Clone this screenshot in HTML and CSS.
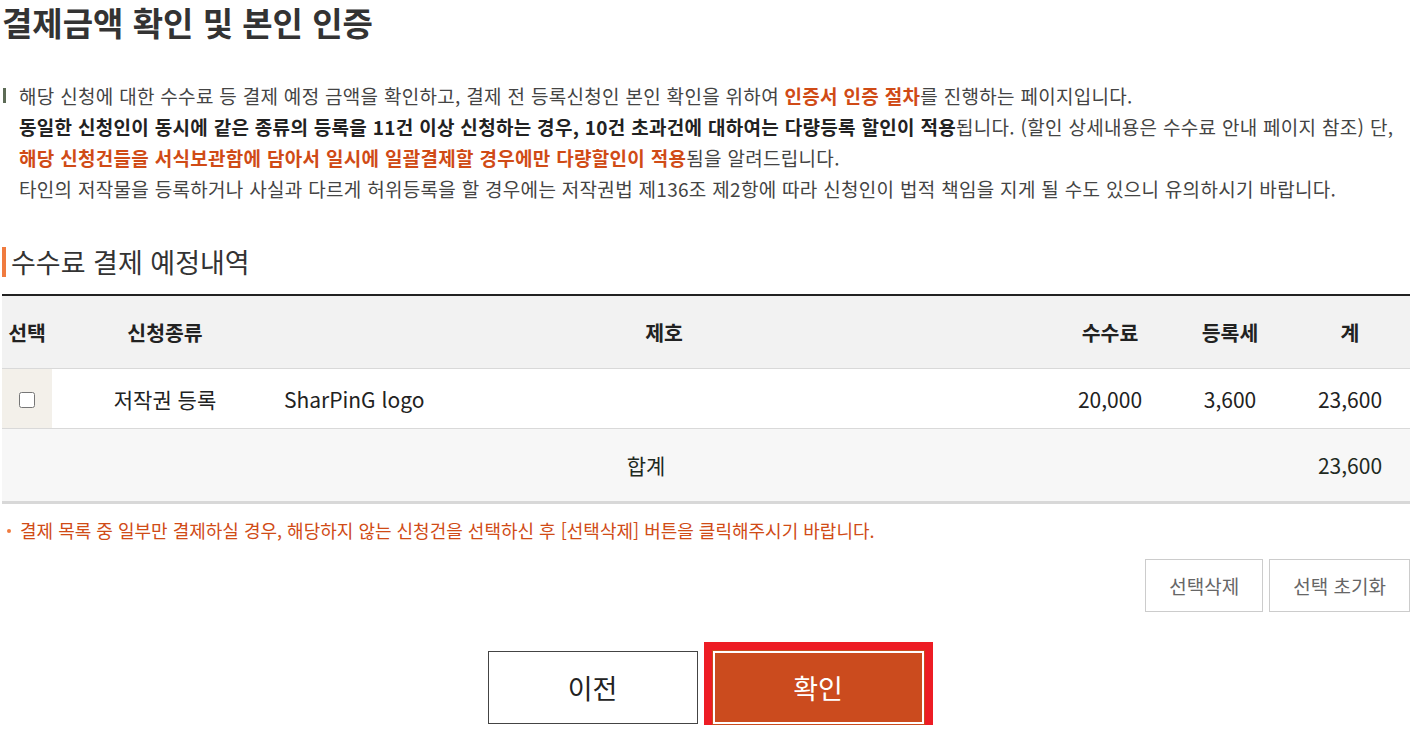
FILE: index.html
```html
<!DOCTYPE html>
<html lang="ko">
<head>
  <meta charset="UTF-8">
  <meta name="viewport" content="width=device-width, initial-scale=1.0">
  <title>결제금액 확인 및 본인 인증</title>
  <link rel="stylesheet" href="styles.css">
</head>
<body>
  <div class="page">
    <h1>결제금액 확인 및 본인 인증</h1>

    <div class="intro">
      <p class="intro-first">해당 신청에 대한 수수료 등 결제 예정 금액을 확인하고, 결제 전 등록신청인 본인 확인을 위하여 <b class="hl">인증서 인증 절차</b>를 진행하는 페이지입니다.</p>
      <p><b>동일한 신청인이 동시에 같은 종류의 등록을 11건 이상 신청하는 경우, 10건 초과건에 대하여는 다량등록 할인이 적용</b>됩니다. (할인 상세내용은 수수료 안내 페이지 참조) 단,</p>
      <p><b class="hl">해당 신청건들을 서식보관함에 담아서 일시에 일괄결제할 경우에만 다량할인이 적용</b>됨을 알려드립니다.</p>
      <p>타인의 저작물을 등록하거나 사실과 다르게 허위등록을 할 경우에는 저작권법 제136조 제2항에 따라 신청인이 법적 책임을 지게 될 수도 있으니 유의하시기 바랍니다.</p>
    </div>

    <h2 class="section-title">수수료 결제 예정내역</h2>

    <table class="fee-table">
      <colgroup>
        <col style="width: 50px">
        <col style="width: 226px">
        <col>
        <col style="width: 120px">
        <col style="width: 120px">
        <col style="width: 120px">
      </colgroup>
      <thead>
        <tr>
          <th>선택</th>
          <th>신청종류</th>
          <th>제호</th>
          <th>수수료</th>
          <th>등록세</th>
          <th>계</th>
        </tr>
      </thead>
      <tbody>
        <tr>
          <td class="check-cell"><input type="checkbox"></td>
          <td>저작권 등록</td>
          <td class="title-cell">SharPinG logo</td>
          <td>20,000</td>
          <td>3,600</td>
          <td>23,600</td>
        </tr>
      </tbody>
      <tfoot>
        <tr>
          <td colspan="5">합계</td>
          <td>23,600</td>
        </tr>
      </tfoot>
    </table>

    <p class="notice">결제 목록 중 일부만 결제하실 경우, 해당하지 않는 신청건을 선택하신 후 [선택삭제] 버튼을 클릭해주시기 바랍니다.</p>

    <div class="table-actions">
      <button class="small-button">선택삭제</button>
      <button class="small-button">선택 초기화</button>
    </div>

    <div class="bottom-actions">
      <button class="prev-button">이전</button>
      <button class="confirm-button">확인</button>
    </div>
  </div>
</body>
</html>
```

FILE: styles.css
```css
body {
  margin: 0;
  font-family: 'Noto Sans CJK KR', 'Noto Sans', sans-serif;
  color: #444;
  background-color: #fff;
}

.page {
  padding: 0 11px 0 2px;
}

h1 {
  margin: 0;
  font-size: 33px;
  line-height: 44px;
  font-weight: bold;
  color: #333;
}

.intro {
  margin-top: 36px;
}

.intro p {
  margin: 0;
  padding-left: 17px;
  font-size: 19px;
  letter-spacing: 0.3px;
  line-height: 31px;
  color: #444;
  white-space: nowrap;
}

.intro b {
  color: #222;
}

.intro .hl {
  color: #d04b16;
}

.intro-first {
  position: relative;
}

/* 첫 줄 왼쪽 표시 막대 */
.intro-first::before {
  content: '';
  position: absolute;
  left: 1px;
  top: 8px;
  width: 3px;
  height: 15px;
  background-color: #5d6b56;
}

.section-title {
  margin: 43px 0 0;
  padding-left: 5px;
  border-left: 4px solid #f07b3f;
  font-size: 27px;
  line-height: 30px;
  font-weight: normal;
  color: #333;
}

.fee-table {
  width: 1408px;
  margin-top: 17px;
  border-collapse: collapse;
  border-top: 2px solid #222;
  border-bottom: 3px solid #d8d8d8;
  table-layout: fixed;
}

.fee-table th {
  height: 72px;
  padding: 0;
  background-color: #f2f2f2;
  border-bottom: 1px solid #d9d9d9;
  font-size: 20.5px;
  font-weight: bold;
  color: #222;
  text-align: center;
}

.fee-table tbody td {
  height: 59px;
  padding: 0;
  border-bottom: 1px solid #d9d9d9;
  font-size: 21px;
  color: #222;
  text-align: center;
}

.fee-table .check-cell {
  background-color: #f3f0ea;
}

.check-cell input {
  width: 16px;
  height: 16px;
  margin: 4px 0 0;
}

.fee-table .title-cell {
  text-align: left;
  padding-left: 6px;
}

.fee-table tfoot td {
  height: 72px;
  padding: 0;
  background-color: #f7f7f7;
  font-size: 21px;
  color: #1f2a1f;
  text-align: center;
}

.notice {
  margin: 13px 0 0;
  padding-left: 18px;
  position: relative;
  font-size: 18px;
  line-height: 26px;
  color: #d04b16;
}

.notice::before {
  content: '';
  position: absolute;
  left: 5px;
  top: 12px;
  width: 4px;
  height: 4px;
  border-radius: 50%;
  background-color: #f07b3f;
}

.table-actions {
  display: flex;
  justify-content: flex-end;
  gap: 6px;
  margin-top: 16px;
}

.small-button {
  height: 53px;
  padding: 0 23px;
  border: 1px solid #ccc;
  background-color: #fff;
  font-family: inherit;
  font-size: 19px;
  color: #666;
  cursor: pointer;
}

.bottom-actions {
  display: flex;
  justify-content: center;
  align-items: center;
  gap: 14px;
  margin-top: 38px;
}

.prev-button {
  width: 210px;
  height: 73px;
  border: 1px solid #444;
  background-color: #fff;
  font-family: inherit;
  font-size: 27px;
  color: #222;
  cursor: pointer;
}

.confirm-button {
  width: 213px;
  height: 75px;
  border: 1px solid #cb4b1e;
  background-color: #cb4b1e;
  box-shadow: inset 0 0 0 2px #fff;
  outline: 8px solid #ed1c24;
  font-family: inherit;
  font-size: 27px;
  color: #fff;
  cursor: pointer;
}
```
